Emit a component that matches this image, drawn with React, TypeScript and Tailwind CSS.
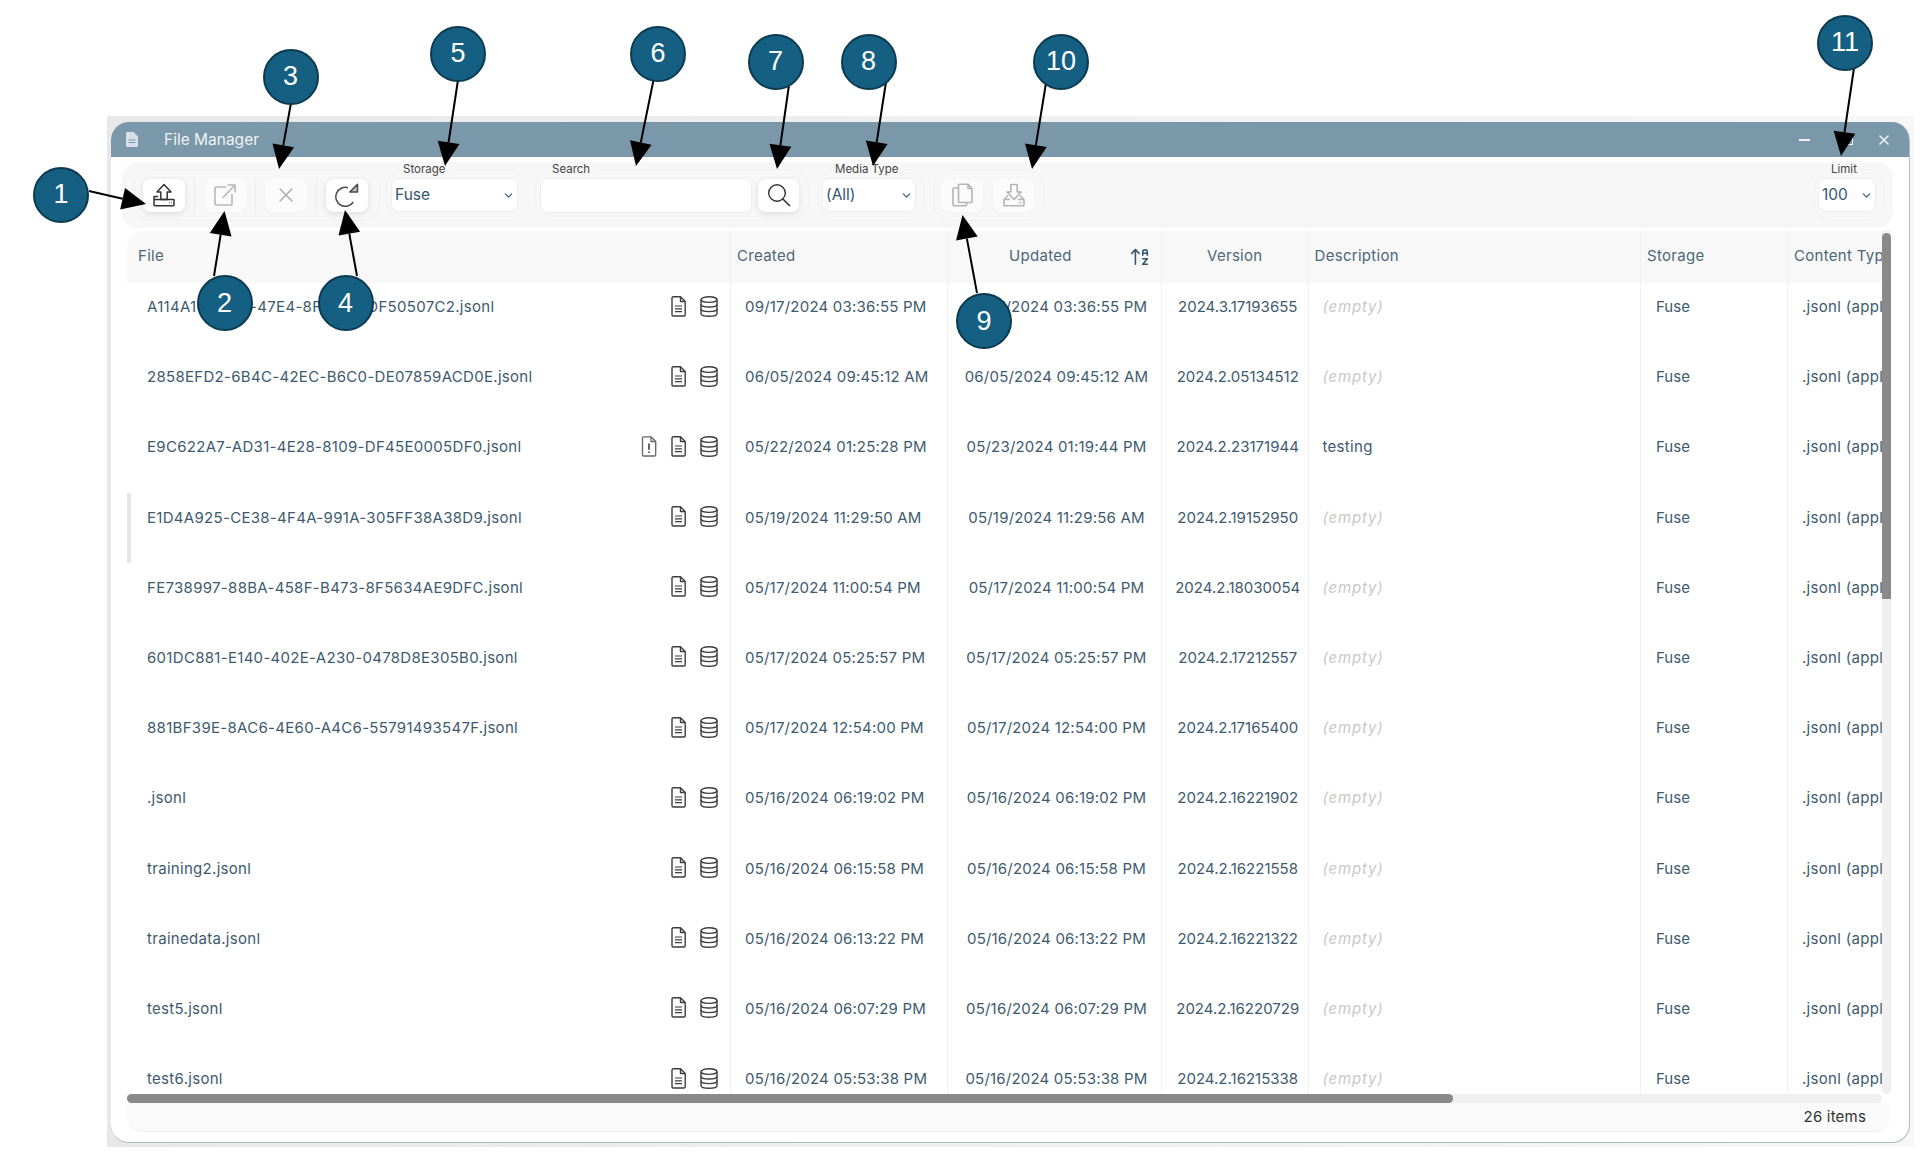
import { ArrowUpAZ, ChevronDown, X } from "lucide-react";
import type { ReactNode } from "react";

interface FileRow {
  name: string;
  created: string;
  updated: string;
  version: string;
  description?: string;
  info?: boolean;
}

const ROWS: FileRow[] = [
  { name: "A114A1C1-1113-47E4-8F1A-112DF50507C2.jsonl", created: "09/17/2024 03:36:55 PM", updated: "09/17/2024 03:36:55 PM", version: "2024.3.17193655" },
  { name: "2858EFD2-6B4C-42EC-B6C0-DE07859ACD0E.jsonl", created: "06/05/2024 09:45:12 AM", updated: "06/05/2024 09:45:12 AM", version: "2024.2.05134512" },
  { name: "E9C622A7-AD31-4E28-8109-DF45E0005DF0.jsonl", created: "05/22/2024 01:25:28 PM", updated: "05/23/2024 01:19:44 PM", version: "2024.2.23171944", description: "testing", info: true },
  { name: "E1D4A925-CE38-4F4A-991A-305FF38A38D9.jsonl", created: "05/19/2024 11:29:50 AM", updated: "05/19/2024 11:29:56 AM", version: "2024.2.19152950" },
  { name: "FE738997-88BA-458F-B473-8F5634AE9DFC.jsonl", created: "05/17/2024 11:00:54 PM", updated: "05/17/2024 11:00:54 PM", version: "2024.2.18030054" },
  { name: "601DC881-E140-402E-A230-0478D8E305B0.jsonl", created: "05/17/2024 05:25:57 PM", updated: "05/17/2024 05:25:57 PM", version: "2024.2.17212557" },
  { name: "881BF39E-8AC6-4E60-A4C6-55791493547F.jsonl", created: "05/17/2024 12:54:00 PM", updated: "05/17/2024 12:54:00 PM", version: "2024.2.17165400" },
  { name: ".jsonl", created: "05/16/2024 06:19:02 PM", updated: "05/16/2024 06:19:02 PM", version: "2024.2.16221902" },
  { name: "training2.jsonl", created: "05/16/2024 06:15:58 PM", updated: "05/16/2024 06:15:58 PM", version: "2024.2.16221558" },
  { name: "trainedata.jsonl", created: "05/16/2024 06:13:22 PM", updated: "05/16/2024 06:13:22 PM", version: "2024.2.16221322" },
  { name: "test5.jsonl", created: "05/16/2024 06:07:29 PM", updated: "05/16/2024 06:07:29 PM", version: "2024.2.16220729" },
  { name: "test6.jsonl", created: "05/16/2024 05:53:38 PM", updated: "05/16/2024 05:53:38 PM", version: "2024.2.16215338" },
];

// callouts laid over the screenshot: badge centre, arrow start, arrow tip
const CALLOUTS = [
  { n: "1", cx: 61, cy: 194.5, x1: 89, y1: 191, x2: 146, y2: 204 },
  { n: "2", cx: 224.5, cy: 303, x1: 214, y1: 276, x2: 224.5, y2: 211 },
  { n: "3", cx: 290.5, cy: 76.5, x1: 291, y1: 103, x2: 279, y2: 169 },
  { n: "4", cx: 345.5, cy: 303, x1: 357, y1: 276, x2: 345, y2: 210 },
  { n: "5", cx: 458, cy: 53.5, x1: 458, y1: 80, x2: 445, y2: 166 },
  { n: "6", cx: 658, cy: 53.5, x1: 653.5, y1: 80, x2: 636, y2: 166 },
  { n: "7", cx: 775.5, cy: 61.5, x1: 789, y1: 85, x2: 777, y2: 169 },
  { n: "8", cx: 868.5, cy: 61.5, x1: 886, y1: 82, x2: 873, y2: 166 },
  { n: "9", cx: 984, cy: 321, x1: 977, y1: 293, x2: 962.5, y2: 215 },
  { n: "10", cx: 1061, cy: 61.5, x1: 1046, y1: 83, x2: 1032, y2: 169 },
  { n: "11", cx: 1845, cy: 42.5, x1: 1854, y1: 68, x2: 1841, y2: 156 },
];

function Arrow({ x1, y1, x2, y2 }: { x1: number; y1: number; x2: number; y2: number }) {
  const len = Math.hypot(x2 - x1, y2 - y1);
  const ux = (x2 - x1) / len;
  const uy = (y2 - y1) / len;
  const bx = x2 - ux * 24;
  const by = y2 - uy * 24;
  const head = `${x2},${y2} ${bx - uy * 11},${by + ux * 11} ${bx + uy * 11},${by - ux * 11}`;
  return (
    <g>
      <line x1={x1} y1={y1} x2={bx} y2={by} stroke="#000" strokeWidth={2} />
      <polygon points={head} fill="#000" />
    </g>
  );
}

function UploadIcon() {
  return (
    <svg width="24" height="24" viewBox="0 0 24 24" fill="none" stroke="#333" strokeWidth="1.5" strokeLinejoin="round">
      <path d="M12 1.5 L19 9 H15.2 V16.5 H8.8 V9 H5 Z" />
      <path d="M6 13.5 H2 V22 a0.8 0.8 0 0 0 .8 .8 H21.2 a0.8 0.8 0 0 0 .8 -.8 V16.5 H2" />
      <path d="M17 19.8 H17.8 M19.2 19.8 H20" strokeWidth="1" />
    </svg>
  );
}

function ExternalIcon() {
  return (
    <svg width="24" height="24" viewBox="0 0 24 24" fill="none" stroke="#b9b9b9" strokeWidth="1.6">
      <path d="M13 4 H3 a1 1 0 0 0 -1 1 V21 a1 1 0 0 0 1 1 H18 a1 1 0 0 0 1 -1 V11" />
      <path d="M9.5 15 L22 2 M14.5 2 H22 V9.5" />
    </svg>
  );
}

function RefreshIcon() {
  return (
    <svg width="24" height="24" viewBox="0 0 24 24" fill="none" stroke="#4c4c4c" strokeWidth="1.5">
      <path d="M13 4.7 A9.5 9.5 0 1 0 18.3 19" />
      <path d="M22.5 1.2 V9 H14.8 Z" strokeLinejoin="round" fill="#bdbdbd" />
    </svg>
  );
}

function SearchIcon() {
  return (
    <svg width="24" height="24" viewBox="0 0 24 24" fill="none" stroke="#333" strokeWidth="1.4">
      <circle cx="10" cy="10" r="8.3" />
      <path d="M15.8 16 L23 23" strokeWidth="1.7" />
    </svg>
  );
}

function CopyIcon() {
  return (
    <svg width="21" height="24" viewBox="0 0 21 24" fill="none" stroke="#b5b5b5" strokeWidth="1.6" strokeLinejoin="round">
      <path d="M6.5 5 V18.5 a1 1 0 0 0 1 1 H19 a1 1 0 0 0 1 -1 V5.5 L16 1.2 H7.5 a1 1 0 0 0 -1 1 Z M16 1.2 V5.5 H20" />
      <path d="M6.5 5 H2 a1 1 0 0 0 -1 1 V21.8 a1 1 0 0 0 1 1 H13.5 a1 1 0 0 0 1 -1 V19.5" />
    </svg>
  );
}

function DownloadIcon() {
  return (
    <svg width="24" height="24" viewBox="0 0 24 24" fill="none" stroke="#b5b5b5" strokeWidth="1.6" strokeLinejoin="round">
      <path d="M12 16.5 L19 9 H15.2 V1.5 H8.8 V9 H5 Z" />
      <path d="M6 12.5 L2 16.5 V22 a0.8 0.8 0 0 0 .8 .8 H21.2 a0.8 0.8 0 0 0 .8 -.8 V16.5 L18 12.5 M2 16.5 H8 M16 16.5 H22" />
      <path d="M16.5 19.8 H20" strokeWidth="1" />
    </svg>
  );
}

function DocIcon() {
  return (
    <svg width="15" height="21" viewBox="0 0 15 21" fill="none" stroke="#3d3d3d" strokeWidth="1.4" strokeLinejoin="round">
      <path d="M1 2 a1.2 1.2 0 0 1 1.2 -1.2 H9.5 L14.2 5.5 V18.8 a1.2 1.2 0 0 1 -1.2 1.2 H2.2 A1.2 1.2 0 0 1 1 18.8 Z" />
      <path d="M9.5 1 V5.5 H14" />
      <path d="M4 10 H11 M4 12.8 H11 M4 15.6 H11" strokeWidth="1.2" />
    </svg>
  );
}

function InfoDocIcon() {
  return (
    <svg width="16" height="21" viewBox="0 0 15 21" fill="none" stroke="#666" strokeWidth="1.3" strokeLinejoin="round">
      <path d="M1 2 a1.2 1.2 0 0 1 1.2 -1.2 H9.5 L14.2 5.5 V18.8 a1.2 1.2 0 0 1 -1.2 1.2 H2.2 A1.2 1.2 0 0 1 1 18.8 Z" />
      <path d="M9.5 1 V5.5 H14" />
      <path d="M7.5 7.5 V13.8 M7.5 15.4 V17" stroke="#333" strokeWidth="1.5" />
    </svg>
  );
}

function DbIcon() {
  return (
    <svg width="18" height="21" viewBox="0 0 18 21" fill="none" stroke="#3d3d3d" strokeWidth="1.4">
      <ellipse cx="9" cy="3.6" rx="8" ry="2.8" />
      <path d="M1 3.6 V17.4 C1 19 4.6 20.2 9 20.2 S17 19 17 17.4 V3.6" />
      <path d="M1 8.2 C1 9.8 4.6 11 9 11 S17 9.8 17 8.2" />
      <path d="M1 12.8 C1 14.4 4.6 15.6 9 15.6 S17 14.4 17 12.8" />
    </svg>
  );
}

function ToolButton({ children, active = false, className = "w-[42px]" }: { children: ReactNode; active?: boolean; className?: string }) {
  return (
    <button
      className={`${className} h-[33px] flex items-center justify-center rounded-lg shrink-0 ${
        active ? "bg-white shadow-[0_2px_7px_rgba(0,0,0,0.1)]" : "bg-[#fbfbfb] shadow-[0_1px_3px_rgba(0,0,0,0.03)]"
      }`}
    >
      {children}
    </button>
  );
}

function Divider() {
  return <div className="w-px h-[33px] bg-[#ececec] mx-[9px] shrink-0" />;
}

function Group({ label, children, className }: { label?: string; children: ReactNode; className: string }) {
  return (
    <div className={`relative h-[52px] border border-[#f1f1f1] rounded-[18px] flex items-center shrink-0 ${className}`}>
      {label && (
        <span className="absolute left-[12px] top-[-7px] bg-[#f7f7f7] px-[4px] text-[11.5px] leading-[13px] text-[#444]">{label}</span>
      )}
      {children}
    </div>
  );
}

function SelectBox({ value, className }: { value: string; className: string }) {
  return (
    <div className={`h-[34px] bg-white border border-[#eeeeee] rounded-lg flex items-center justify-between pl-[3px] pr-[2px] text-[15.5px] text-[#34566e] ${className}`}>
      <span>{value}</span>
      <ChevronDown size={13} strokeWidth={2} className="text-[#34566e]" />
    </div>
  );
}

function HeaderCell({ children, className }: { children: ReactNode; className: string }) {
  return <div className={`h-full flex items-center shrink-0 pb-px ${className}`}>{children}</div>;
}

function Row({ row }: { row: FileRow }) {
  return (
    <div className="flex h-[70.2px] text-[15px] leading-6 tracking-[0.3px] text-[#3e5a6e]">
      <div className="w-[603px] shrink-0 pt-3 pl-[20px] pr-3 flex items-start justify-between">
        <span>{row.name}</span>
        <div className="flex items-center gap-[14px] h-[22px]">
          {row.info && <InfoDocIcon />}
          <DocIcon />
          <DbIcon />
        </div>
      </div>
      <div className="w-[217px] shrink-0 pt-3 pl-[14px] border-l border-[#f1f1f1] whitespace-nowrap tracking-[0.2px]">{row.created}</div>
      <div className="w-[214px] shrink-0 pt-3 pl-[4px] text-center border-l border-[#f1f1f1] whitespace-nowrap tracking-[0.2px]">{row.updated}</div>
      <div className="w-[146.5px] shrink-0 pt-3 pl-[6px] text-center border-l border-[#f1f1f1] whitespace-nowrap tracking-normal">{row.version}</div>
      <div className="w-[332.5px] shrink-0 pt-3 pl-[14px] border-l border-[#f1f1f1]">
        {row.description ?? <span className="italic tracking-[0.8px] text-[#c9c9c9]">(empty)</span>}
      </div>
      <div className="w-[147px] shrink-0 pt-3 pl-[15px] border-l border-[#f1f1f1] tracking-normal">Fuse</div>
      <div className="w-[300px] shrink-0 pt-3 pl-[14px] border-l border-[#f1f1f1] whitespace-nowrap">.jsonl (application/json)</div>
    </div>
  );
}

export default function App() {
  return (
    <div className="relative w-[1930px] h-[1170px] bg-white overflow-hidden font-['Inter','Liberation_Sans',sans-serif]">
      <div className="pt-[116px] pl-[107px]">
        {/* grey band left around the window by the capture */}
        <div className="w-[1807px] h-[1031px] pt-[6px] pl-[4px] bg-gradient-to-r from-[#e8e8e8] to-[#f7f7f7]">
          <div className="w-[1799px] h-[1021px] bg-white rounded-[18px] border-r border-b border-[#a9bcc8] flex flex-col overflow-hidden">
            {/* Title bar */}
            <div className="h-[35px] shrink-0 bg-[#7a98a9] flex items-center text-white">
              <svg className="ml-[15px]" width="12" height="15" viewBox="0 0 12 15" fill="#d5dfe5">
                <path d="M0 1 a1 1 0 0 1 1 -1 H7.5 L12 4.5 V14 a1 1 0 0 1 -1 1 H1 a1 1 0 0 1 -1 -1 Z" />
                <path d="M2.5 8 H9.5 M2.5 10.5 H9.5" stroke="#7a98a9" strokeWidth="1" />
              </svg>
              <span className="ml-[26px] text-[15.5px] text-[#eef2f5]">File Manager</span>
              <div className="ml-auto flex items-center">
                <div className="w-[11px] h-[2px] bg-[#eef2f5]" />
                <div className="w-[10px] h-[10px] border border-[#eef2f5] ml-[33px]" />
                <X size={16} strokeWidth={2.4} className="ml-[23px] mr-[17px] text-[#eef2f5]" />
              </div>
            </div>

            {/* Toolbar */}
            <div className="h-[66px] shrink-0 mt-[5px] ml-[11px] w-[1771px] bg-[#f7f7f7] rounded-2xl flex items-center pl-[12px]">
              <Group className="w-[246px] pl-[8px]">
                <ToolButton active><UploadIcon /></ToolButton>
                <Divider />
                <ToolButton><ExternalIcon /></ToolButton>
                <Divider />
                <ToolButton><X size={24} strokeWidth={1.5} className="text-[#adadad]" /></ToolButton>
                <Divider />
                <ToolButton active><RefreshIcon /></ToolButton>
              </Group>
              <Group label="Storage" className="w-[141px] ml-[6px] pl-[4px]">
                <SelectBox value="Fuse" className="w-[127px]" />
              </Group>
              <Group label="Search" className="w-[274px] ml-[8px] pl-[4px]">
                <input className="w-[212px] h-[35px] bg-white border border-[#eeeeee] rounded-lg outline-none" />
                <ToolButton active className="w-[41px] ml-[6px]"><SearchIcon /></ToolButton>
              </Group>
              <Group label="Media Type" className="w-[107px] ml-[9px] pl-[3px]">
                <SelectBox value="(All)" className="w-[94px]" />
              </Group>
              <Group className="w-[112px] ml-[8px] pl-[7px]">
                <ToolButton><CopyIcon /></ToolButton>
                <ToolButton className="w-[41px] ml-[10px]"><DownloadIcon /></ToolButton>
              </Group>
              <Group label="Limit" className="w-[71px] ml-auto mr-[8px] pl-[3px]">
                <SelectBox value="100" className="w-[58px]" />
              </Group>
            </div>

            {/* Table */}
            <div className="h-[863px] shrink-0 mt-[3px] ml-[16px] w-[1764px] flex">
              <div className="w-[1755px] overflow-hidden rounded-tl-2xl">
                <div className="w-[1960px]">
                  <div className="h-[52px] flex bg-[#f8f8f8] text-[15px] tracking-[0.3px] text-[#4d6778]">
                    <HeaderCell className="w-[603px] pl-[11px]">File</HeaderCell>
                    <HeaderCell className="w-[217px] pl-[6px] border-l border-[#f0f0f0]">Created</HeaderCell>
                    <HeaderCell className="w-[214px] pl-[61px] border-l border-[#f0f0f0]">
                      Updated
                      <ArrowUpAZ size={22} strokeWidth={1.7} className="ml-[57px] text-[#35536a]" />
                    </HeaderCell>
                    <HeaderCell className="w-[146.5px] justify-center border-l border-[#f0f0f0]">Version</HeaderCell>
                    <HeaderCell className="w-[332.5px] pl-[6px] border-l border-[#f0f0f0]">Description</HeaderCell>
                    <HeaderCell className="w-[147px] pl-[6px] border-l border-[#f0f0f0]">Storage</HeaderCell>
                    <HeaderCell className="w-[300px] pl-[6px] border-l border-[#f0f0f0]">Content Type</HeaderCell>
                  </div>
                  <div className="relative h-[811px] overflow-hidden">
                    <div className="absolute left-0 top-[210px] w-[4px] h-[70px] bg-[#e6e6e6]" />
                    {ROWS.map((row) => (
                      <Row key={row.name} row={row} />
                    ))}
                  </div>
                </div>
              </div>
              {/* vertical scrollbar */}
              <div className="w-[9px] shrink-0 bg-[#f0f0f0] rounded-b-md">
                <div className="h-[366px] mt-[2px] bg-[#8a8a8a] rounded-t-lg" />
              </div>
            </div>

            {/* horizontal scrollbar */}
            <div className="h-[9px] shrink-0 ml-[16px] w-[1755px] bg-[#f0f0f0] rounded-full">
              <div className="w-[1326px] h-full bg-[#8a8a8a] rounded-full" />
            </div>

            {/* Footer */}
            <div className="h-[29px] shrink-0 ml-[16px] w-[1763px] bg-[#fafafa] border-b border-[#efefef] rounded-b-2xl flex items-center justify-end pr-[24px] pt-px text-[15px] tracking-[0.2px] text-[#333]">
              26 items
            </div>
          </div>
        </div>
      </div>

      {/* Numbered callouts */}
      <svg className="absolute inset-0 pointer-events-none" width="1930" height="1170">
        {CALLOUTS.map((c) => (
          <Arrow key={c.n} x1={c.x1} y1={c.y1} x2={c.x2} y2={c.y2} />
        ))}
      </svg>
      {CALLOUTS.map((c) => (
        <div
          key={c.n}
          className="absolute w-[56px] h-[56px] rounded-full bg-[#156082] border-2 border-[#0c3a50] flex items-center justify-center text-white text-[27px] font-['Liberation_Sans',sans-serif]"
          style={{ left: c.cx - 28, top: c.cy - 28 }}
        >
          {c.n}
        </div>
      ))}
    </div>
  );
}
